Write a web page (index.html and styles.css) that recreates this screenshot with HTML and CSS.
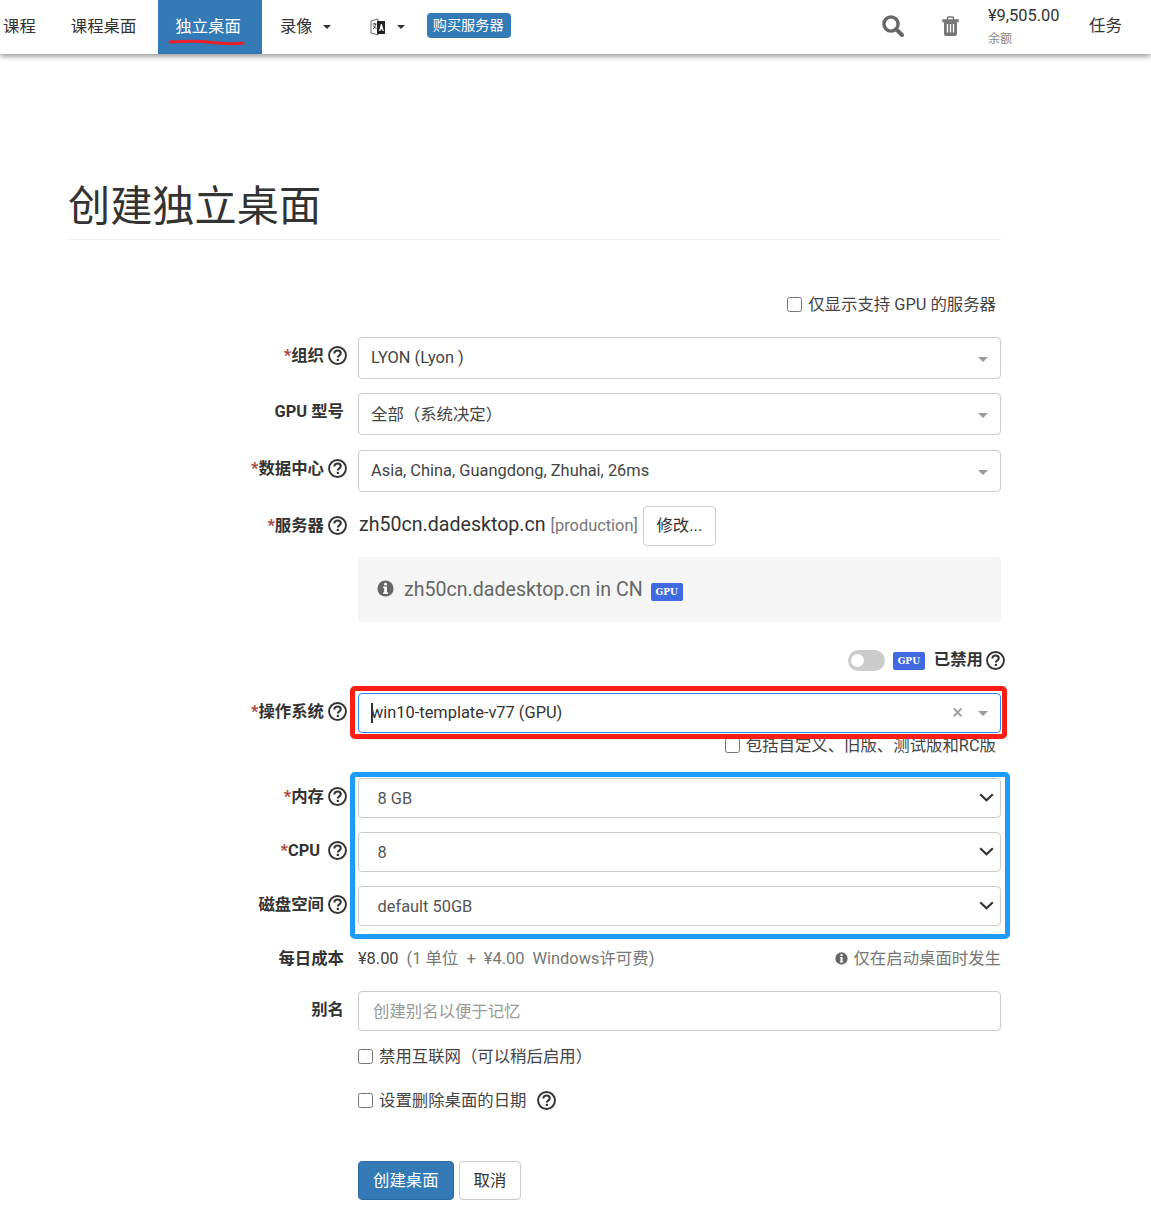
FILE: index.html
```html
<!DOCTYPE html>
<html lang="zh">
<head>
<meta charset="utf-8">
<title>创建独立桌面</title>
<link rel="stylesheet" href="styles.css">
</head>
<body>
<svg class="defs" width="0" height="0" aria-hidden="true">
  <symbol id="help" viewBox="0 0 20 20">
    <circle cx="10" cy="10" r="8.900" fill="none" stroke="currentColor" stroke-width="2"/>
    <path d="M6.700 7.900c0-2 1.400-3.200 3.400-3.200 2 0 3.300 1.200 3.300 2.800 0 1.400-.9 2-1.700 2.600-.8.600-1.300 1.100-1.300 2.100" fill="none" stroke="currentColor" stroke-width="2.200"/>
    <rect x="9.200" y="13.500" width="2.300" height="2.300" fill="currentColor"/>
  </symbol>
  <symbol id="info" viewBox="0 0 18 18">
    <circle cx="9" cy="9" r="8.500" fill="currentColor"/>
    <rect x="7.600" y="3" width="2.900" height="2.600" fill="#fff"/>
    <path d="M6.600 7h3.900v6h1v1.700H6.600V13h1V8.700h-1z" fill="#fff"/>
  </symbol>
  <symbol id="chev" viewBox="0 0 15 9">
    <path d="M1.200 1.200 7.500 7.200l6.300-6" fill="none" stroke="currentColor" stroke-width="2.200"/>
  </symbol>
</svg>

<header class="navbar">
  <nav class="nav-left">
    <a class="nav-item first">课程</a>
    <a class="nav-item">课程桌面</a>
    <a class="nav-item active">独立桌面
      <svg class="scribble" width="78" height="8" viewBox="0 0 78 8"><path d="M2 3c14-1 30-1.500 42 .5 10 1.200 20 1.500 31 .7" fill="none" stroke="#e8212a" stroke-width="3" stroke-linecap="round"/></svg>
    </a>
    <a class="nav-item drop">录像<span class="caret"></span></a>
    <a class="nav-item drop lang">
      <svg class="lang-icon" width="16" height="18" viewBox="0 0 16 18"><path d="M1 3 8 1v16l-7-2z" fill="#fff" stroke="#666"/><path d="M7 3h8v13H7z" fill="#222"/><path d="M9 13l1.900-7h1l1.900 7h-1.300l-.3-1.500h-1.600l-.3 1.500z" fill="#fff"/><path d="M2.500 6h4M4.500 4.800V6M3 11c1.500-1 2.500-3 2.700-5M3.500 7.500c.5 1.500 1.500 2.500 3 3" stroke="#333" stroke-width=".9" fill="none"/></svg>
      <span class="caret"></span>
    </a>
    <a class="buy">购买服务器</a>
  </nav>
  <div class="nav-right">
    <svg class="icon-search" width="22" height="22" viewBox="0 0 22 22"><circle cx="9" cy="9" r="7.100" fill="none" stroke="#666" stroke-width="3.400"/><path d="m14.500 14.500 5.500 5.500" stroke="#666" stroke-width="4" stroke-linecap="round"/></svg>
    <svg class="icon-trash" width="17" height="20" viewBox="0 0 17 20"><path d="M1 4h15v1.600H1zM5.500 4V2a1 1 0 0 1 1-1h4a1 1 0 0 1 1 1v2" fill="none" stroke="#777" stroke-width="1.500"/><path d="M2 5h13v13a2 2 0 0 1-2 2H4a2 2 0 0 1-2-2z" fill="#777"/><path d="M5.500 8v8.500M8.500 8v8.500M11.500 8v8.500" stroke="#fff" stroke-width="1.300"/></svg>
    <div class="balance"><span class="amount">¥9,505.00</span><span class="balance-label">余额</span></div>
    <a class="tasks">任务</a>
  </div>
</header>

<main class="page">
  <h1 class="title">创建独立桌面</h1>

  <form class="form">
    <div class="check-right top-check"><label class="check"><input type="checkbox">仅显示支持 GPU 的服务器</label></div>

    <div class="row row-select row-first">
      <div class="label"><span class="req">*</span>组织<svg class="help"><use href="#help"/></svg></div>
      <div class="select2"><span>LYON (Lyon )</span><span class="arrow"></span></div>
    </div>
    <div class="row row-select">
      <div class="label plain">GPU 型号</div>
      <div class="select2"><span>全部（系统决定）</span><span class="arrow"></span></div>
    </div>
    <div class="row row-select">
      <div class="label"><span class="req">*</span>数据中心<svg class="help"><use href="#help"/></svg></div>
      <div class="select2"><span>Asia, China, Guangdong, Zhuhai, 26ms</span><span class="arrow"></span></div>
    </div>
    <div class="row row-server">
      <div class="label"><span class="req">*</span>服务器<svg class="help"><use href="#help"/></svg></div>
      <div class="server">
        <span class="server-name">zh50cn.dadesktop.cn</span>
        <span class="server-tag">[production]</span>
        <button type="button" class="btn btn-change">修改...</button>
      </div>
    </div>
    <div class="row row-well">
      <div class="label"></div>
      <div class="well"><svg class="info"><use href="#info"/></svg><span>zh50cn.dadesktop.cn in CN</span><span class="badge">GPU</span></div>
    </div>

    <div class="toggle-row">
      <span class="toggle"><span class="knob"></span></span>
      <span class="badge">GPU</span>
      <span class="disabled-label">已禁用</span><svg class="help"><use href="#help"/></svg>
    </div>

    <div class="row row-os">
      <div class="label"><span class="req">*</span>操作系统<svg class="help"><use href="#help"/></svg></div>
      <div class="select2 focus"><span class="cursor"></span><span>win10-template-v77 (GPU)</span><span class="clear">×</span><span class="arrow"></span></div>
    </div>
    <div class="check-right os-check"><label class="check"><input type="checkbox">包括自定义、旧版、测试版和RC版</label></div>

    <div class="blue-group">
      <div class="row row-spec">
        <div class="label"><span class="req">*</span>内存<svg class="help"><use href="#help"/></svg></div>
        <div class="native"><span>8 GB</span><svg class="chev"><use href="#chev"/></svg></div>
      </div>
      <div class="row row-spec">
        <div class="label"><span class="req">*</span>CPU<svg class="help cpu-help"><use href="#help"/></svg></div>
        <div class="native"><span>8</span><svg class="chev"><use href="#chev"/></svg></div>
      </div>
      <div class="row row-spec">
        <div class="label">磁盘空间<svg class="help"><use href="#help"/></svg></div>
        <div class="native"><span>default 50GB</span><svg class="chev"><use href="#chev"/></svg></div>
      </div>
    </div>

    <div class="row row-cost">
      <div class="label plain">每日成本</div>
      <div class="cost">
        <span class="cost-main">¥8.00</span>
        <span class="cost-detail">(1 单位 &nbsp;+ &nbsp;¥4.00 &nbsp;Windows许可费)</span>
        <span class="cost-note"><svg class="info small"><use href="#info"/></svg>仅在启动桌面时发生</span>
      </div>
    </div>

    <div class="row row-alias">
      <div class="label plain">别名</div>
      <input class="input" type="text" placeholder="创建别名以便于记忆">
    </div>

    <div class="option first-option"><label class="check"><input type="checkbox">禁用互联网（可以稍后启用）</label></div>
    <div class="option second-option"><label class="check"><input type="checkbox">设置删除桌面的日期</label><svg class="help"><use href="#help"/></svg></div>

    <div class="actions">
      <button type="button" class="btn btn-primary">创建桌面</button>
      <button type="button" class="btn">取消</button>
    </div>
  </form>
</main>
</body>
</html>
```
FILE: styles.css
```css
* { box-sizing: border-box; }
html, body { margin: 0; padding: 0; }
body {
  background: #fff;
  color: #333;
  font-family: Roboto, "Noto Sans CJK SC", sans-serif;
  font-size: 16.4px;
  line-height: 1.43;
  height: 1218px;
  overflow: hidden;
}
.defs { position: absolute; }

/* Navbar */
.navbar {
  height: 54px;
  display: flex;
  justify-content: space-between;
  align-items: stretch;
  box-shadow: 0 2px 6px rgba(0, 0, 0, .45);
  background: #fff;
}
.nav-left { display: flex; align-items: stretch; }
.nav-item {
  display: flex;
  align-items: center;
  padding: 0 17px;
  color: #333;
  position: relative;
}
.nav-item.first { padding: 0 18px 0 3px; }
.nav-item.active { background: #337ab7; color: #fff; margin-left: 5px; padding-right: 21px; }
.nav-item.drop { padding: 0; margin-left: 18px; }
.nav-item.lang { margin-left: 39px; }
.scribble { position: absolute; left: 10px; top: 39px; }
.caret {
  display: inline-block;
  width: 0;
  height: 0;
  margin-left: 10px;
  border-left: 4px solid transparent;
  border-right: 4px solid transparent;
  border-top: 4px solid #333;
}
.lang .caret { margin-left: 11px; }
.buy {
  align-self: flex-start;
  margin: 13px 0 0 22px;
  height: 25px;
  padding: 0 7px 0 6px;
  background: #337ab7;
  color: #fff;
  border-radius: 4px;
  font-size: 14.2px;
  line-height: 24px;
}
.nav-right { display: flex; align-items: center; }
.icon-search { margin-right: 38px; margin-top: -3px; }
.icon-trash { margin-right: 29px; margin-top: -3px; }
.balance { display: flex; flex-direction: column; width: 101px; margin-top: -1px; }
.amount { line-height: 20px; color: #333; }
.balance-label { font-size: 12px; line-height: 16px; margin-top: 5px; color: #888; }
.tasks { width: 62px; color: #333; margin-top: -2px; }

/* Page */
.page { padding: 0 150px 0 68px; }
.title {
  margin: 124px 0 0;
  height: 62px;
  border-bottom: 1px solid #eee;
  font-size: 42.2px;
  font-weight: 400;
  line-height: 58px;
  color: #333;
}

/* Form */
.form { display: flex; flex-direction: column; }
.check { display: inline-flex; align-items: center; color: #444; font-weight: 400; white-space: nowrap; }
.check input {
  appearance: none;
  width: 15px;
  height: 15px;
  margin: 0 6px 0 0;
  border: 1px solid #767676;
  border-radius: 2.500px;
  background: #fff;
}
.check-right { display: flex; justify-content: flex-end; padding-right: 5px; }
.top-check { margin-top: 53px; height: 24px; align-items: center; }
.row { display: grid; grid-template-columns: 279px 643px; column-gap: 11px; }
.label {
  display: flex;
  justify-content: flex-end;
  align-items: flex-start;
  padding-top: 7px;
  font-weight: 700;
  white-space: nowrap;
  color: #333;
}
.label.plain { padding-right: 3px; }
.req { color: #a94442; }
.help { width: 19px; height: 19px; margin-left: 4px; margin-top: 2px; color: #333; flex: none; }
.cpu-help { margin-left: 8px; }

.row-select { margin-bottom: 14.34px; }
.row-first { margin-top: 20px; }
.select2 {
  position: relative;
  height: 42px;
  padding: 0 12px;
  display: flex;
  align-items: center;
  border: 1px solid #ccc;
  border-radius: 4px;
  color: #444;
  background: #fff;
}
.arrow {
  position: absolute;
  right: 12px;
  top: 19px;
  width: 0;
  height: 0;
  border-left: 5px solid transparent;
  border-right: 5px solid transparent;
  border-top: 5px solid #999;
}
.row-server { height: 40px; }
.row-server .label { padding-top: 8px; }
.server { display: flex; align-items: center; gap: 5px; padding-left: 1px; }
.server-name { font-size: 19.6px; color: #333; margin-top: -1px; }
.server-tag { color: #777; }
.btn {
  height: 39px;
  padding: 0 14px;
  border: 1px solid #ccc;
  border-radius: 4px;
  background: #fff;
  color: #333;
  font: inherit;
}
.btn-change { height: 40px; width: 73px; padding: 0; }
.row-well { margin-top: 11px; }
.row-well .label { padding: 0; }
.well {
  height: 65px;
  display: flex;
  align-items: center;
  padding: 2px 19px 0;
  background: #f5f5f5;
  border-radius: 4px;
  font-size: 19.6px;
  color: #666;
}
.info { width: 17px; height: 17px; margin-right: 10px; color: #666; flex: none; margin-top: -3px; }
.info.small { width: 13px; height: 13px; margin-right: 5px; margin-top: 0; }
.badge {
  display: inline-block;
  width: 32px;
  height: 18px;
  border-radius: 2px;
  background: #4169e1;
  color: #fff;
  font-family: "DejaVu Serif", serif;
  font-weight: 700;
  font-size: 9px;
  line-height: 18px;
  text-align: center;
}
.well .badge { margin-left: 8px; margin-top: 3px; }

.toggle-row {
  margin-top: 27px;
  height: 24px;
  display: flex;
  justify-content: flex-end;
  align-items: center;
  width: 937px;
}
.toggle {
  width: 37px;
  height: 21px;
  border-radius: 11px;
  background: #ccc;
  display: flex;
  align-items: center;
  padding-left: 3px;
}
.knob { width: 13px; height: 13px; border-radius: 50%; background: #fff; }
.toggle-row .badge { margin-left: 8px; }
.disabled-label { margin-left: 9px; font-weight: 700; margin-top: -3px; }
.toggle-row .help { margin-left: 3px; margin-top: 0; }

.row-os { margin-top: 20px; position: relative; }
.row-os .select2 {
  height: 40px;
  border-color: #2684ff;
  color: #333;
}
.row-os::after {
  content: "";
  box-sizing: border-box;
  position: absolute;
  left: 282px;
  top: -7px;
  width: 657px;
  height: 53px;
  border: 5px solid #ff1e14;
  border-radius: 5px;
  pointer-events: none;
}
.cursor { width: 2px; height: 20px; background: #333; margin-right: -2px; }
.clear { position: absolute; right: 37px; top: 6px; font-size: 20px; line-height: 24px; color: #999; }
.row-os .arrow { top: 17px; }
.os-check { height: 24px; margin-top: 1px; }

.blue-group { position: relative; margin-top: 20px; display: flex; flex-direction: column; gap: 14px; }
.blue-group::after {
  content: "";
  box-sizing: border-box;
  position: absolute;
  left: 282px;
  top: -6px;
  width: 660px;
  height: 167px;
  border: 5px solid #1e9bff;
  border-radius: 5px;
  pointer-events: none;
}
.native {
  height: 40px;
  padding: 2px 6px 0 18.5px;
  display: flex;
  align-items: center;
  justify-content: space-between;
  border: 1px solid #ccc;
  border-radius: 4px;
  color: #555;
}
.chev { width: 15px; height: 9px; color: #333; margin-top: -2px; }

.row-cost { margin-top: 21px; height: 24px; }
.row-cost .label { padding-top: 0; }
.cost { display: flex; align-items: center; color: #777; white-space: pre; }
.cost-main { color: #444; margin-right: 8px; }
.cost-note { margin-left: auto; display: flex; align-items: center; color: #777; }
.row-alias { margin-top: 20px; }
.input {
  height: 40px;
  width: 643px;
  padding: 2px 14px 0;
  border: 1px solid #ccc;
  border-radius: 4px;
  font: inherit;
  color: #555;
}
.input::placeholder { color: #999; }
.option { margin-left: 290px; display: flex; align-items: center; height: 24px; }
.first-option { margin-top: 14px; }
.second-option { margin-top: 20px; }
.second-option .help { margin-left: 10px; margin-top: 0; }
.actions { margin: 48px 0 0 290px; display: flex; gap: 5px; }
.btn-primary { background: #337ab7; border-color: #2e6da4; color: #fff; }
```
